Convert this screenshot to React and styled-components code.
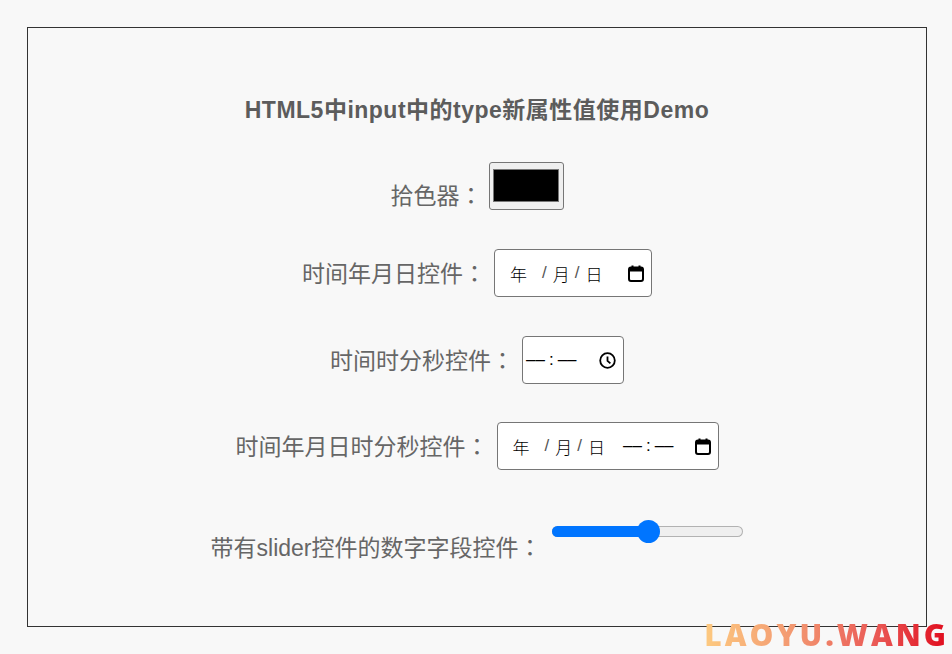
import React from "react";
import styled, { createGlobalStyle } from "styled-components";

const GlobalStyle = createGlobalStyle`
  html, body {
    margin: 0;
    padding: 0;
    background: #f8f8f8;
  }
  body {
    font-family: "Liberation Sans", "Noto Sans CJK SC", sans-serif;
  }
`;

const Page = styled.div`
  position: relative;
  width: 952px;
  height: 654px;
  padding: 27px 0 0 27px;
  box-sizing: border-box;
`;

const Box = styled.section`
  width: 900px;
  height: 600px;
  box-sizing: border-box;
  border: 1px solid #333;
  display: flex;
  flex-direction: column;
  align-items: center;
  padding-top: 67px;
`;

const Title = styled.h2`
  margin: 0;
  font-size: 23px;
  line-height: 30px;
  font-weight: bold;
  letter-spacing: 0.5px;
  color: #5c5c5c;
`;

const Row = styled.div`
  display: flex;
  align-items: ${(p) => p.$align || "center"};
  justify-content: center;
  gap: ${(p) => p.$gap || 8}px;
  margin-top: ${(p) => p.$top}px;
`;

const Label = styled.label`
  font-size: 23px;
  line-height: 30px;
  color: #666;
  white-space: nowrap;
  margin-top: ${(p) => p.$offset || 0}px;
`;

const Colon = styled.span`
  font-family: "Noto Sans CJK JP", sans-serif;
`;

const ColorWell = styled.div`
  box-sizing: border-box;
  width: 75px;
  height: 48px;
  border: 1px solid #767676;
  border-radius: 3px;
  background: #efefef;
  padding: 6px 4px 7px 3px;
  display: flex;
`;

const Swatch = styled.div`
  flex: 1;
  background: #000;
  border: 1px solid #777;
`;

const Field = styled.div`
  box-sizing: border-box;
  height: 48px;
  width: ${(p) => p.$w}px;
  border: 1px solid #767676;
  border-radius: 4px;
  background: #fff;
  display: flex;
  align-items: center;
  padding: 0 7px 0 ${(p) => p.$pl}px;
  font-family: "Noto Sans CJK SC", sans-serif;
  font-size: 17px;
  font-weight: 300;
  color: #000;
  white-space: nowrap;
`;

const Seg = styled.span`
  display: inline-block;
`;

const Sep = styled.span`
  display: inline-block;
  font-family: "Liberation Sans", sans-serif;
  color: #555;
  margin: 0 ${(p) => p.$r || 6}px 0 ${(p) => p.$l || 6}px;
`;

const Clock = styled.span`
  display: inline-flex;
  align-items: center;
  font-family: "Liberation Sans", sans-serif;
  font-size: 17px;
  font-weight: 400;
  margin-left: ${(p) => p.$l || 0}px;
`;

const ClockSep = styled.span`
  margin: 0 4px;
`;

const IconSlot = styled.span`
  margin-left: auto;
  display: flex;
`;

const Slider = styled.div`
  position: relative;
  width: 191px;
  height: 23px;
  display: flex;
  align-items: center;
`;

const Track = styled.div`
  width: 100%;
  height: 11px;
  border-radius: 6px;
  background: #efefef;
  box-shadow: inset 0 0 0 1px #b2b2b2;
  overflow: hidden;
`;

const Fill = styled.div`
  height: 100%;
  background: #0075ff;
`;

const Thumb = styled.div`
  position: absolute;
  top: 0;
  width: 23px;
  height: 23px;
  border-radius: 50%;
  background: #0075ff;
`;

const Watermark = styled.div`
  position: absolute;
  right: 3px;
  bottom: 7px;
  font-family: "Open Sans", sans-serif;
  font-weight: 800;
  font-size: 30px;
  line-height: 24px;
  letter-spacing: 3px;
  white-space: nowrap;
  background: linear-gradient(90deg, #fdca80 0%, #f39a72 35%, #ea5a56 70%, #e00a1c 100%);
  -webkit-background-clip: text;
  background-clip: text;
  color: transparent;
`;

const CalendarIcon = () => (
  <svg width="16" height="17" viewBox="0 0 16 17">
    <rect x="1" y="2.5" width="14" height="13.5" rx="2" fill="none" stroke="#000" strokeWidth="2" />
    <rect x="1" y="2.5" width="14" height="4" fill="#000" />
    <rect x="3.5" y="0.5" width="2" height="3" fill="#000" />
    <rect x="10.5" y="0.5" width="2" height="3" fill="#000" />
  </svg>
);

const ClockIcon = () => (
  <svg width="17" height="17" viewBox="0 0 17 17">
    <circle cx="8.5" cy="8.5" r="7.3" fill="none" stroke="#000" strokeWidth="1.8" />
    <path d="M8.5 4.5 V8.8 L11.4 11.4" fill="none" stroke="#000" strokeWidth="1.8" />
  </svg>
);

const DateText = () => (
  <>
    <Seg>年</Seg>
    <Sep $l={15} $r={6}>/</Sep>
    <Seg>月</Seg>
    <Sep $l={5} $r={6}>/</Sep>
    <Seg>日</Seg>
  </>
);

const TimeText = ({ offset }) => (
  <Clock $l={offset}>
    ––<ClockSep>:</ClockSep>––
  </Clock>
);

const RangeControl = ({ value, min = 0, max = 100 }) => {
  const ratio = (value - min) / (max - min);
  const left = ratio * (191 - 23) + 1;
  return (
    <Slider>
      <Track>
        <Fill style={{ width: left + 11.5 }} />
      </Track>
      <Thumb style={{ left }} />
    </Slider>
  );
};

const FieldLabel = ({ text, offset }) => (
  <Label $offset={offset}>
    {text}
    <Colon>：</Colon>
  </Label>
);

export default function App() {
  return (
    <>
      <GlobalStyle />
      <Page>
        <Box>
          <Title>HTML5中input中的type新属性值使用Demo</Title>

          <Row $top={37} $align="flex-start" $gap={6}>
            <FieldLabel text="拾色器" offset={17} />
            <ColorWell>
              <Swatch />
            </ColorWell>
          </Row>

          <Row $top={38}>
            <FieldLabel text="时间年月日控件" />
            <Field $w={158} $pl={15}>
              <DateText />
              <IconSlot>
                <CalendarIcon />
              </IconSlot>
            </Field>
          </Row>

          <Row $top={39}>
            <FieldLabel text="时间时分秒控件" />
            <Field $w={102} $pl={3}>
              <TimeText />
              <IconSlot>
                <ClockIcon />
              </IconSlot>
            </Field>
          </Row>

          <Row $top={38}>
            <FieldLabel text="时间年月日时分秒控件" />
            <Field $w={222} $pl={15}>
              <DateText />
              <TimeText offset={18} />
              <IconSlot>
                <CalendarIcon />
              </IconSlot>
            </Field>
          </Row>

          <Row $top={50} $align="flex-start" $gap={11}>
            <FieldLabel text="带有slider控件的数字字段控件" offset={11} />
            <RangeControl value={50} />
          </Row>
        </Box>
        <Watermark>LAOYU.WANG</Watermark>
      </Page>
    </>
  );
}
